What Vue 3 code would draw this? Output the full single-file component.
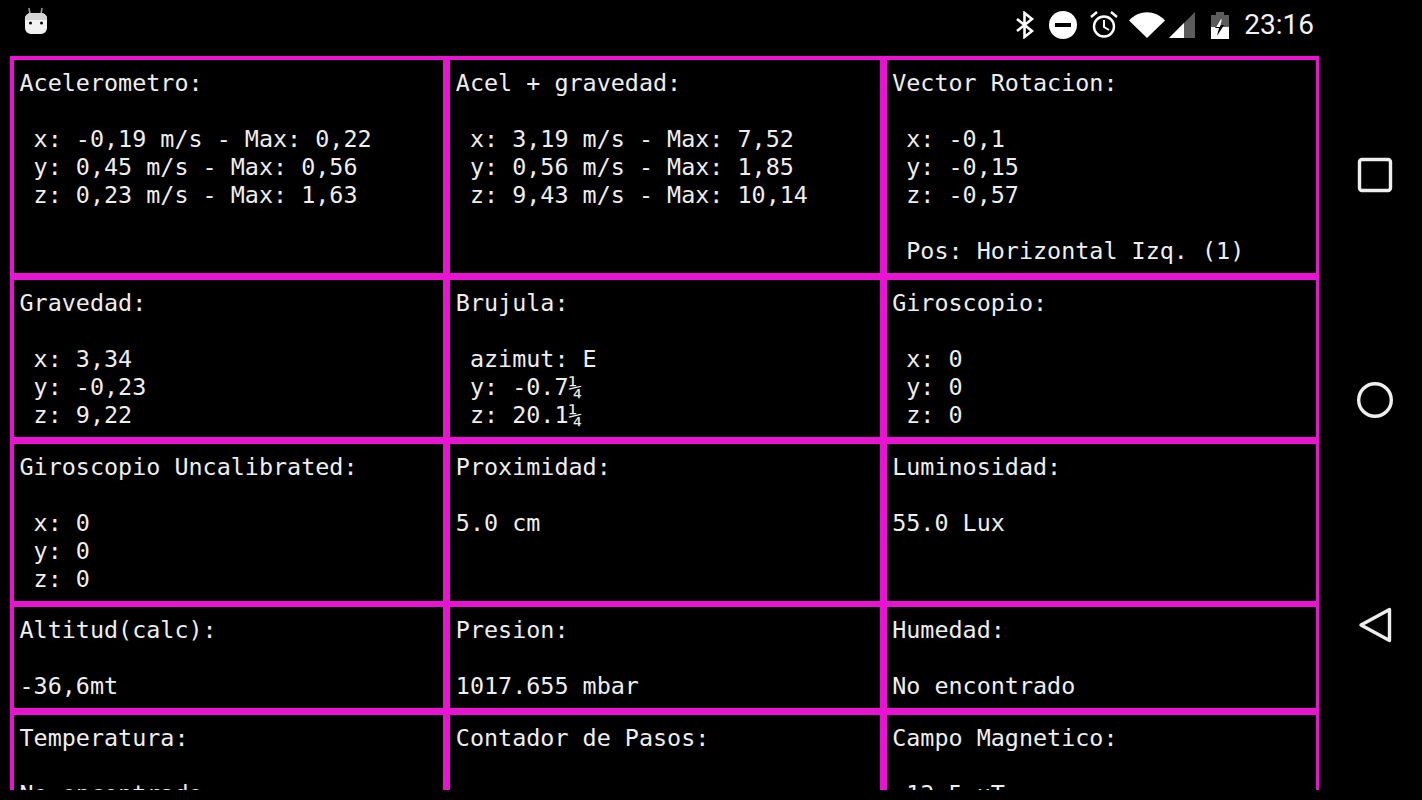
<script setup>
const cells = [
  { t: 'Acelerometro:', b: ' x: -0,19 m/s - Max: 0,22\n y: 0,45 m/s - Max: 0,56\n z: 0,23 m/s - Max: 1,63' },
  { t: 'Acel + gravedad:', b: ' x: 3,19 m/s - Max: 7,52\n y: 0,56 m/s - Max: 1,85\n z: 9,43 m/s - Max: 10,14' },
  { t: 'Vector Rotacion:', b: ' x: -0,1\n y: -0,15\n z: -0,57\n\n Pos: Horizontal Izq. (1)' },
  { t: 'Gravedad:', b: ' x: 3,34\n y: -0,23\n z: 9,22' },
  { t: 'Brujula:', b: ' azimut: E\n y: -0.7¼\n z: 20.1¼' },
  { t: 'Giroscopio:', b: ' x: 0\n y: 0\n z: 0' },
  { t: 'Giroscopio Uncalibrated:', b: ' x: 0\n y: 0\n z: 0' },
  { t: 'Proximidad:', b: '5.0 cm' },
  { t: 'Luminosidad:', b: '55.0 Lux' },
  { t: 'Altitud(calc):', b: '-36,6mt' },
  { t: 'Presion:', b: '1017.655 mbar' },
  { t: 'Humedad:', b: 'No encontrado' },
  { t: 'Temperatura:', b: 'No encontrado' },
  { t: 'Contador de Pasos:', b: '' },
  { t: 'Campo Magnetico:', b: ':13,5 µT' }
]
</script>

<template>
  <div class="screen">
    <div class="content">
      <header class="status">
        <svg class="robot" width="24" height="28" viewBox="0 0 24 28">
          <path d="M5 1l1 6M18 1l-1 6" stroke="#999" stroke-width="1.6" fill="none" />
          <path d="M1 13a6 6 0 0 1 6-7h10a6 6 0 0 1 6 7v8a6 6 0 0 1-6 6H7a6 6 0 0 1-6-6z" fill="#f2f2f2" />
          <path d="M1 13a6 6 0 0 1 6-7h10a6 6 0 0 1 6 7z" fill="#d4d4d4" />
          <circle cx="6.5" cy="16" r="1.5" fill="#000" />
          <circle cx="17.5" cy="16" r="1.5" fill="#000" />
        </svg>
        <div class="tray">
          <svg class="ic-bt" width="24" height="28" viewBox="0 0 24 28">
            <path d="M4 8l15 12-7.500 6V2L19 8 4 20" fill="none" stroke="#fff" stroke-width="2.600" />
          </svg>
          <svg class="ic-dnd" width="30" height="30" viewBox="0 0 30 30">
            <circle cx="15" cy="15" r="14" fill="#fff" />
            <rect x="7" y="13" width="16" height="4" fill="#000" />
          </svg>
          <svg class="ic-alarm" width="30" height="30" viewBox="0 0 30 30">
            <circle cx="15" cy="16.500" r="10" fill="none" stroke="#fff" stroke-width="2.400" />
            <path d="M15 10v7l5 3" fill="none" stroke="#fff" stroke-width="2" />
            <path d="M2 7l6-5M28 7l-6-5" fill="none" stroke="#fff" stroke-width="2.400" />
          </svg>
          <svg class="ic-wifi" width="36" height="28" viewBox="0 0 36 28">
            <path d="M0 9.500C10-1.500 26-1.500 36 9.500L18 27z" fill="#fff" />
          </svg>
          <svg class="ic-signal" width="28" height="28" viewBox="0 0 28 28">
            <path d="M27 1v26H1z" fill="#5c5c5c" />
            <path d="M16 12v15H1z" fill="#fff" />
          </svg>
          <svg class="ic-batt" width="18" height="28" viewBox="0 0 18 28">
            <path d="M5 1h8v3h5v24H0V4h5z" fill="#5c5c5c" />
            <path d="M0 16h18v12H0z" fill="#fff" />
            <path d="M11 6l-7 11h4l-2 8 7-11H9z" fill="#000" />
            <path d="M10.500 7L5 16h4l1.500-6z" fill="#fff" />
          </svg>
          <span class="time">23:16</span>
        </div>
      </header>
      <div class="viewport">
        <div class="grid">
          <div v-for="c in cells" :key="c.t" class="cell">{{ c.t + '\n\n' + c.b }}</div>
        </div>
      </div>
    </div>
    <nav class="nav">
      <svg width="36" height="36" viewBox="0 0 36 36">
        <rect x="2.500" y="2.500" width="31" height="31" rx="2.500" fill="none" stroke="#eee" stroke-width="3.400" />
      </svg>
      <svg width="36" height="36" viewBox="0 0 36 36">
        <circle cx="18" cy="18" r="16.300" fill="none" stroke="#eee" stroke-width="3.400" />
      </svg>
      <svg width="36" height="36" viewBox="0 0 36 36">
        <path d="M32.500 2.500v31L4 18z" fill="none" stroke="#eee" stroke-width="3.400" stroke-linejoin="round" />
      </svg>
    </nav>
  </div>
</template>

<style scoped>
.screen {
  display: flex;
  width: 1422px;
  height: 800px;
  background: #000;
  overflow: hidden;
}
.content {
  width: 1328px;
  padding: 0 9px 0 10px;
  box-sizing: border-box;
}
.status {
  display: flex;
  align-items: center;
  justify-content: space-between;
  height: 56px;
  padding-bottom: 6px;
  box-sizing: border-box;
}
.robot {
  align-self: flex-start;
  margin: 7px 0 0 14px;
}
.tray {
  display: flex;
  align-items: center;
  padding-right: 5px;
}
.ic-bt { margin-right: 11px; }
.ic-dnd { margin-right: 11px; }
.ic-alarm { margin-right: 10px; }
.ic-wifi { margin-right: 3px; }
.ic-signal { margin-right: 15px; }
.ic-batt { margin-right: 15px; }
.time {
  font: 28px/30px Roboto, sans-serif;
  color: #f2f2f2;
}
.viewport {
  height: 734px;
  overflow: hidden;
}
.grid {
  display: grid;
  grid-template-columns: repeat(3, 429.33px);
  gap: 6.8px 7px;
  padding: 4px 3px 4px 4px;
  background: #e814d2;
}
.cell {
  background: #000;
  color: #eee;
  padding: 9px 5.5px 8px;
  font: 23.4px/28px "DejaVu Sans Mono", "Liberation Mono", monospace;
  white-space: pre;
}
.nav {
  flex: 1;
  display: flex;
  flex-direction: column;
  align-items: center;
  justify-content: center;
  gap: 189px;
}
</style>

<style>
html, body { background: #000; }
</style>
